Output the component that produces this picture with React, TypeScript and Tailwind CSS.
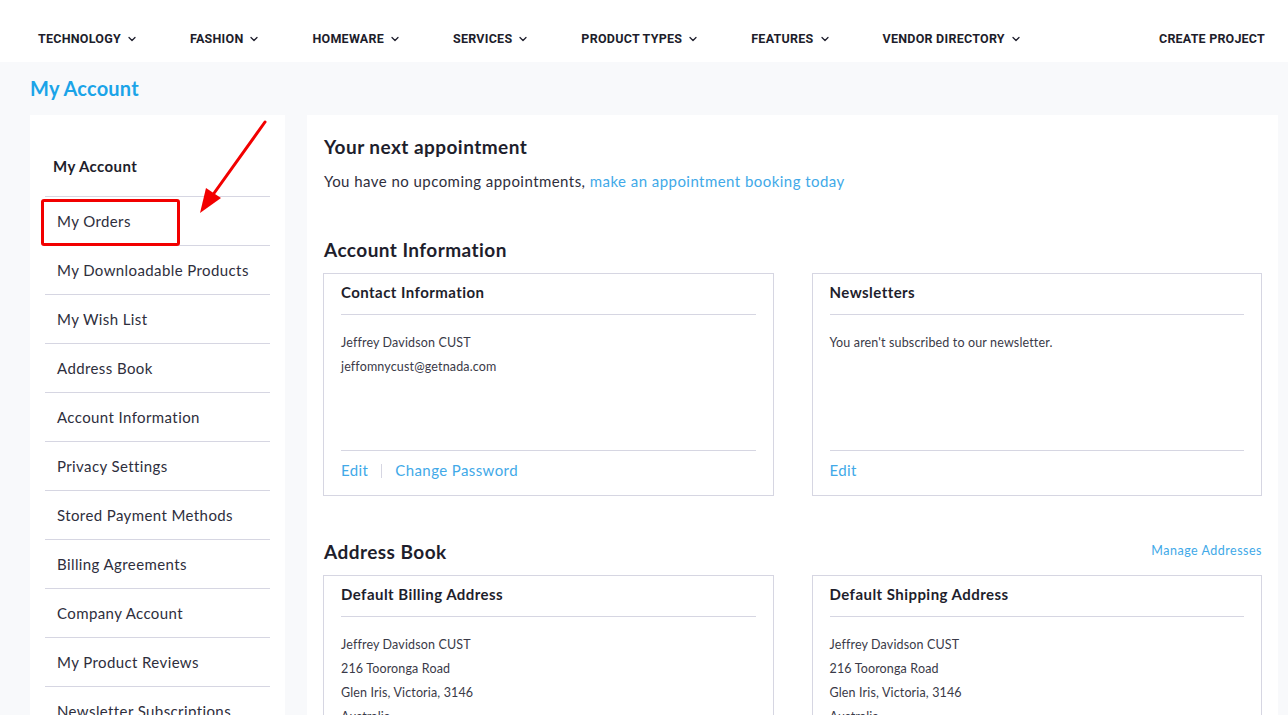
import React from "react";
import { ChevronDown } from "lucide-react";

const navItems = [
  "TECHNOLOGY",
  "FASHION",
  "HOMEWARE",
  "SERVICES",
  "PRODUCT TYPES",
  "FEATURES",
  "VENDOR DIRECTORY",
];

const sideItems = [
  "My Orders",
  "My Downloadable Products",
  "My Wish List",
  "Address Book",
  "Account Information",
  "Privacy Settings",
  "Stored Payment Methods",
  "Billing Agreements",
  "Company Account",
  "My Product Reviews",
  "Newsletter Subscriptions",
];

function Box({
  title,
  lines,
  footer,
}: {
  title: string;
  lines: string[];
  footer?: React.ReactNode;
}) {
  return (
    <div className="flex-1 border border-[#d6d6e2] bg-white px-[17px] pt-[8px] flex flex-col h-[223px]">
      <div className="text-[15px] leading-[20px] font-bold tracking-[0.45px] text-[#1e1e2c] pb-[12px] border-b border-[#d6d6e2]">
        {title}
      </div>
      <div className="pt-[16px] flex-1">
        {lines.map((l) => (
          <div key={l} className="text-[12.5px] leading-[24px] tracking-[0.15px] text-[#3a3a48]">
            {l}
          </div>
        ))}
      </div>
      {footer && (
        <div className="border-t border-[#d6d6e2] h-[45px] pb-[5px] flex items-center text-[15px] tracking-[0.4px] text-[#41a9e8]">
          {footer}
        </div>
      )}
    </div>
  );
}

export default function App() {
  return (
    <div
      className="relative w-[1288px] h-[715px] overflow-hidden bg-[#f8f9fb] text-[#2a2a38]"
      style={{ fontFamily: "Lato, 'Noto Sans', sans-serif" }}
    >
      {/* Top nav */}
      <div className="h-[62px] bg-white flex items-end pb-[15px] pl-[38px] pr-[23px]">
        <div
          className="flex items-center gap-[52px] text-[12.5px] font-bold text-[#1d1d2b] tracking-[0.25px]"
          style={{ fontFamily: "Roboto, 'Liberation Sans', sans-serif" }}
        >
          {navItems.map((n) => (
            <div key={n} className="flex items-center gap-[5px] leading-[16px]">
              <span>{n}</span>
              <ChevronDown size={12} strokeWidth={2.5} />
            </div>
          ))}
        </div>
        <div
          className="ml-auto text-[12.5px] font-bold text-[#1d1d2b] leading-[16px] tracking-[0.2px]"
          style={{ fontFamily: "Roboto, 'Liberation Sans', sans-serif" }}
        >
          CREATE PROJECT
        </div>
      </div>

      {/* Page title */}
      <div className="pl-[30px] pt-[14px] h-[53px]">
        <h1 className="text-[20px] leading-[24px] font-bold tracking-[0.2px] text-[#1ba4e8]">My Account</h1>
      </div>

      <div className="flex pl-[30px] pr-[10px] gap-[22px]">
        {/* Sidebar */}
        <div className="w-[255px] bg-white px-[15px] h-[620px]">
          <div className="pl-[8px] pt-[41px] pb-[20px] text-[15px] leading-[20px] font-bold tracking-[0.4px] text-[#1e1e2c] border-b border-[#d6d6e2]">
            My Account
          </div>
          {sideItems.map((s) => (
            <div
              key={s}
              className="h-[49px] flex items-center pl-[12px] text-[15px] tracking-[0.4px] text-[#2e2e3c] border-b border-[#d6d6e2]"
            >
              {s}
            </div>
          ))}
        </div>

        {/* Main */}
        <div className="flex-1 bg-white pl-[16px] pr-[16px] pt-[20px] h-[620px]">
          <h2 className="pl-[1px] text-[19px] leading-[24px] font-bold tracking-[0.45px] text-[#1e1e2c]">
            Your next appointment
          </h2>
          <p className="pl-[1px] mt-[11px] text-[15px] leading-[22px] tracking-[0.45px] text-[#2e2e3c]">
            You have no upcoming appointments,{" "}
            <span className="text-[#41a9e8]">make an appointment booking today</span>
          </p>

          <h2 className="pl-[1px] mt-[46px] text-[19px] leading-[24px] font-bold tracking-[0.45px] text-[#1e1e2c]">
            Account Information
          </h2>
          <div className="mt-[11px] flex gap-[38px]">
            <Box
              title="Contact Information"
              lines={["Jeffrey Davidson CUST", "jeffomnycust@getnada.com"]}
              footer={
                <>
                  <span>Edit</span>
                  <span className="mx-[13px] h-[14px] w-px bg-[#d6d6e2]" />
                  <span>Change Password</span>
                </>
              }
            />
            <Box
              title="Newsletters"
              lines={["You aren't subscribed to our newsletter."]}
              footer={<span>Edit</span>}
            />
          </div>

          <div className="mt-[44px] flex items-end justify-between">
            <h2 className="pl-[1px] text-[19px] leading-[24px] font-bold tracking-[0.45px] text-[#1e1e2c]">
              Address Book
            </h2>
            <span className="text-[12.5px] leading-[20px] tracking-[0.5px] text-[#41a9e8] mb-[3px]">
              Manage Addresses
            </span>
          </div>
          <div className="mt-[11px] flex gap-[38px]">
            <Box
              title="Default Billing Address"
              lines={[
                "Jeffrey Davidson CUST",
                "216 Tooronga Road",
                "Glen Iris, Victoria, 3146",
                "Australia",
              ]}
            />
            <Box
              title="Default Shipping Address"
              lines={[
                "Jeffrey Davidson CUST",
                "216 Tooronga Road",
                "Glen Iris, Victoria, 3146",
                "Australia",
              ]}
            />
          </div>
        </div>
      </div>

      {/* Annotation: red box */}
      <div className="absolute left-[41px] top-[199px] w-[139px] h-[47px] border-[3px] border-[#f20000] rounded-[3px]" />
      {/* Annotation: arrow */}
      <svg className="absolute left-0 top-0 pointer-events-none" width="1288" height="715">
        <line x1="265" y1="122" x2="207" y2="203" stroke="#f20000" strokeWidth="3" strokeLinecap="round" />
        <polygon points="200,213 206,188 221,198" fill="#f20000" />
      </svg>
    </div>
  );
}
